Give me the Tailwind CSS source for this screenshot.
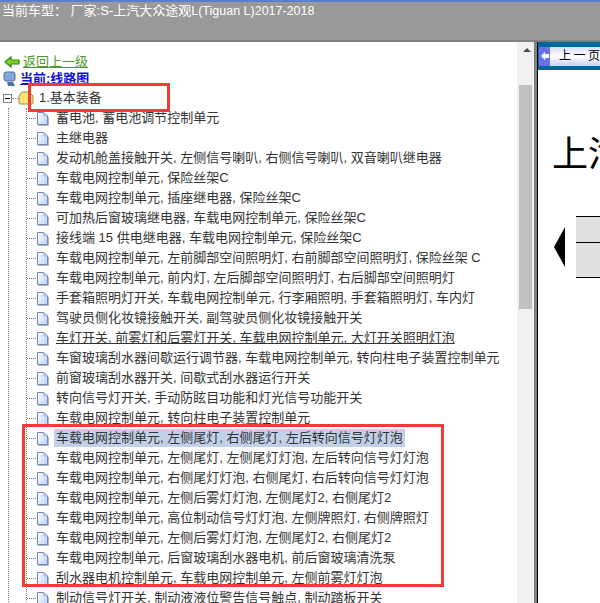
<!DOCTYPE html>
<html lang="zh">
<head>
    <meta charset="UTF-8">
    <title>线路图</title>
    <script src="https://cdn.jsdelivr.net/npm/@tailwindcss/browser@4"></script>
</head>
<body class="relative h-[603px] w-[600px] overflow-hidden bg-white text-[13px] text-[#333] font-['Liberation_Sans','Noto_Sans_CJK_SC',sans-serif]">
    <!-- top bar -->
    <div class="h-[42px] border-t-2 border-b-2 border-t-[#5a7ed0] border-b-[#808080] bg-[#999999] pl-[2px] text-[13px] leading-[17px] text-white whitespace-pre">当前车型： 厂家:S-上汽大众途观<span class="text-[12.5px]">L(Tiguan L)2017-2018</span></div>

    <div class="flex h-[561px]">
        <!-- tree -->
        <div class="w-[517px] overflow-hidden pt-[11px]">
            <div class="flex h-[18px] items-center pl-[4px]">
                <svg width="16" height="12" viewBox="0 0 16 12" class="mr-[3px]"><path d="M1 6 L7 1 V4 H15 V8 H7 V11 Z" fill="#7ed321" stroke="#2f8a0c" stroke-width="1.2"/></svg>
                <a class="text-[#4c9a2a] underline">返回上一级</a>
            </div>
            <div class="flex h-[16px] items-center pl-[3px]">
                <svg width="14" height="16" viewBox="0 0 14 16" class="mr-[3px]"><rect x="1" y="1" width="11" height="9" rx="2" fill="#7fa8dc" stroke="#5a6f95"/><path d="M4 11 H10 L12 15 H5 Z" fill="#4d6fa8"/></svg>
                <a class="font-bold text-[#1111dd] underline">当前:线路图</a>
            </div>
            <div class="relative flex h-[21px] items-center pt-[1px]">
                <div class="ml-[3px] flex h-[9px] w-[9px] items-center justify-center border border-[#808080] bg-white"><div class="h-px w-[5px] bg-black"></div></div>
                <div class="w-[6px] border-t border-dotted border-[#808080]"></div>
                <svg width="16" height="14" viewBox="0 0 16 14"><path d="M1 5 L4 1 H11 L15 5 V12 Q15 13 14 13 H2 Q1 13 1 12 Z" fill="#fbe67a" stroke="#9a8a3a"/></svg>
                <span class="ml-[5px]">1.基本装备</span>
            </div>
            <div id="tree" class="relative ml-[8px] border-l border-dotted border-[#808080]">
                <div id="rows" class="ml-[17px] border-l border-dotted border-[#808080]"></div>
            </div>
        </div>

        <!-- scrollbar -->
        <div class="relative w-[17px] bg-[#f0f0f0] pl-[2px]">
            <div class="mx-auto mt-[6px] h-0 w-0 border-x-[4px] border-b-[4px] border-x-transparent border-b-[#505050]"></div>
            <div class="mt-[33px] h-[224px] w-[13px] bg-[#c0c0c0]"></div>
        </div>
        <div class="w-[3px] bg-[#808080]"></div>
        <div class="w-px bg-black"></div>

        <!-- right pane -->
        <div class="min-w-0 flex-1 overflow-hidden">
            <div class="flex h-[28px] items-center bg-[#006699] pl-[1px]">
                <div class="flex h-[19px] w-[80px] shrink-0 items-center rounded-[2px] bg-gradient-to-b from-[#d8dcfa] via-white to-[#c8ccf5] text-[12px] tracking-[2.5px] text-black">
                    <div class="mr-[9px] flex h-[19px] w-[11px] items-center justify-center bg-[#6a70e8]">
                        <svg width="8" height="8" viewBox="0 0 8 8"><path d="M0 4 L4 0 V2 H8 V6 H4 V8 Z" fill="white"/></svg>
                    </div>
                    <span class="whitespace-pre">上一页</span>
                </div>
            </div>
            <div class="mt-[57px] ml-[14px] text-[36px] leading-[48px] whitespace-nowrap text-black font-['Noto_Sans_CJK_SC',sans-serif]">上汽</div>
            <div class="mt-[41px] ml-[16px] flex items-center">
                <div class="h-0 w-0 border-y-[20px] border-r-[11px] border-y-transparent border-r-black"></div>
                <div class="ml-[11px] w-[40px] shrink-0 border-y border-black bg-[#e0e0e0]">
                    <div class="h-[26px] border-b border-black"></div>
                    <div class="h-[34px]"></div>
                </div>
            </div>
        </div>
    </div>

    <!-- red annotation boxes -->
    <div class="absolute left-[28px] top-[83px] h-[29px] w-[142px] border-[3px] border-[#f53838]"></div>
    <div class="absolute left-[22px] top-[424px] h-[163px] w-[422px] border-[3px] border-[#f53838]"></div>

    <script>
        const items = [
            '蓄电池, 蓄电池调节控制单元',
            '主继电器',
            '发动机舱盖接触开关, 左侧信号喇叭, 右侧信号喇叭, 双音喇叭继电器',
            '车载电网控制单元, 保险丝架C',
            '车载电网控制单元, 插座继电器, 保险丝架C',
            '可加热后窗玻璃继电器, 车载电网控制单元, 保险丝架C',
            '接线端 15 供电继电器, 车载电网控制单元, 保险丝架C',
            '车载电网控制单元, 左前脚部空间照明灯, 右前脚部空间照明灯, 保险丝架 C',
            '车载电网控制单元, 前内灯, 左后脚部空间照明灯, 右后脚部空间照明灯',
            '手套箱照明灯开关, 车载电网控制单元, 行李厢照明, 手套箱照明灯, 车内灯',
            '驾驶员侧化妆镜接触开关, 副驾驶员侧化妆镜接触开关',
            '车灯开关, 前雾灯和后雾灯开关, 车载电网控制单元, 大灯开关照明灯泡',
            '车窗玻璃刮水器间歇运行调节器, 车载电网控制单元, 转向柱电子装置控制单元',
            '前窗玻璃刮水器开关, 间歇式刮水器运行开关',
            '转向信号灯开关, 手动防眩目功能和灯光信号功能开关',
            '车载电网控制单元, 转向柱电子装置控制单元',
            '车载电网控制单元, 左侧尾灯, 右侧尾灯, 左后转向信号灯灯泡',
            '车载电网控制单元, 左侧尾灯, 左侧尾灯灯泡, 左后转向信号灯灯泡',
            '车载电网控制单元, 右侧尾灯灯泡, 右侧尾灯, 右后转向信号灯灯泡',
            '车载电网控制单元, 左侧后雾灯灯泡, 左侧尾灯2, 右侧尾灯2',
            '车载电网控制单元, 高位制动信号灯灯泡, 左侧牌照灯, 右侧牌照灯',
            '车载电网控制单元, 左侧后雾灯灯泡, 左侧尾灯2, 右侧尾灯2',
            '车载电网控制单元, 后窗玻璃刮水器电机, 前后窗玻璃清洗泵',
            '刮水器电机控制单元, 车载电网控制单元, 左侧前雾灯灯泡',
            '制动信号灯开关, 制动液液位警告信号触点, 制动踏板开关'
        ];
        const icon = '<svg width="13" height="15" viewBox="0 0 13 15" class="shrink-0"><defs><linearGradient id="pg" x1="0" y1="0" x2="1" y2="1"><stop offset="0" stop-color="#ffffff"/><stop offset="1" stop-color="#bcd2f5"/></linearGradient></defs><path d="M1.5 1.5 H8 L11.5 5 V13.5 H1.5 Z" fill="url(#pg)" stroke="#7486b8"/><path d="M8 1.5 V5 H11.5" fill="none" stroke="#a0aed0"/><path d="M2 14.5 H12.5 V6" fill="none" stroke="#b0b4c8"/></svg>';
        document.getElementById('rows').innerHTML = items.map((text, i) => `
            <div class="flex h-[20px] items-center">
                <div class="w-[9px] shrink-0 border-t border-dotted border-[#808080]"></div>
                ${icon}
                <span class="ml-[5px] flex h-[18px] items-center whitespace-pre px-[2px] ${i === 16 ? 'bg-[#c2d1ea]' : ''} ${i === 11 ? 'underline' : ''}">${text}</span>
            </div>`).join('');
    </script>
</body>
</html>
